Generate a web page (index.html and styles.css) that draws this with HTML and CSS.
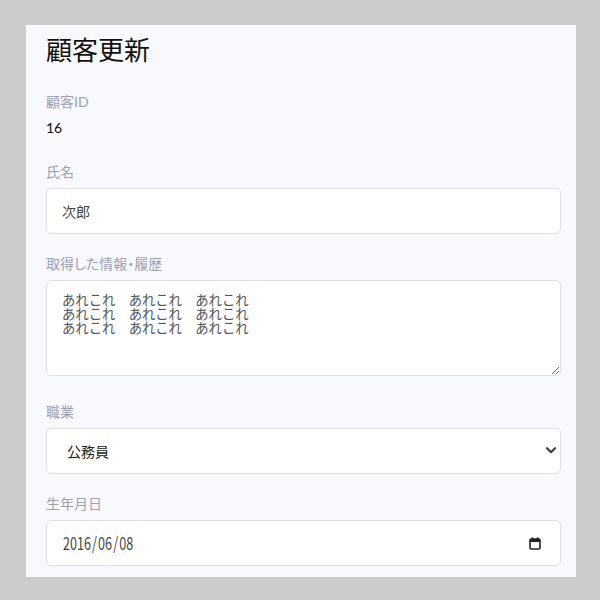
FILE: index.html
```html
<!DOCTYPE html>
<html lang="ja">
<head>
<meta charset="utf-8">
<title>顧客更新</title>
<link rel="stylesheet" href="styles.css">
</head>
<body>
<div class="card">
  <h1 class="title">顧客更新</h1>
  <div class="field field-id">
    <div class="label">顧客ID</div>
    <div class="value">16</div>
  </div>
  <div class="field field-name">
    <label class="label" for="name">氏名</label>
    <input id="name" class="control input" type="text" value="次郎">
  </div>
  <div class="field field-info">
    <label class="label label-prop" for="info">取得した情報・履歴</label>
    <textarea id="info" class="control area">あれこれ　あれこれ　あれこれ
あれこれ　あれこれ　あれこれ
あれこれ　あれこれ　あれこれ</textarea>
  </div>
  <div class="field field-job">
    <label class="label" for="job">職業</label>
    <div class="select-wrap">
      <select id="job" class="control select"><option>公務員</option></select>
      <svg class="chevron" width="10" height="7" viewBox="0 0 10 7"><path d="M1 1.2 L5 5.2 L9 1.2" fill="none" stroke="#3a3f47" stroke-width="2.2" stroke-linecap="round" stroke-linejoin="round"/></svg>
    </div>
  </div>
  <div class="field field-birth">
    <label class="label" for="birth">生年月日</label>
    <div class="control date">
      <span class="date-text">2016<span class="sep">/</span>06<span class="sep">/</span>08</span>
      <svg class="cal" width="12" height="13" viewBox="0 0 12 13"><rect x="1" y="2" width="10" height="10" rx="1.2" fill="none" stroke="#222" stroke-width="1.6"/><rect x="1" y="2" width="10" height="3" fill="#222"/><rect x="2.6" y="0.4" width="1.6" height="2.4" fill="#222"/><rect x="7.8" y="0.4" width="1.6" height="2.4" fill="#222"/></svg>
    </div>
  </div>
</div>
</body>
</html>
```
FILE: styles.css
```css
* { box-sizing: border-box; }
html, body { margin: 0; padding: 0; }
body {
  background: #cccccc;
  font-family: Lato, "Noto Sans CJK JP", sans-serif;
  color: #111;
}
.card {
  margin: 25px 0 0 26px;
  width: 550px;
  height: 552px;
  padding: 8px 15px 0 20px;
  background: #f8f9fc;
  overflow: hidden;
}
.title {
  margin: 0 0 28px 0;
  font-family: "Noto Sans CJK JP", sans-serif;
  font-weight: 400;
  font-size: 26px;
  line-height: 31px;
  color: #111;
}
.label {
  display: block;
  font-family: Lato, "Noto Sans CJK JP", sans-serif;
  font-size: 14px;
  line-height: 20px;
  color: #9ca1b3;
  margin-bottom: 6px;
}
.label-prop { font-feature-settings: "palt"; }
.value {
  font-size: 14px;
  line-height: 20px;
  color: #111;
}
.field-id { margin-bottom: 24px; }
.field-name { margin-bottom: 20px; }
.field-info { margin-bottom: 26px; }
.field-job { margin-bottom: 20px; }
.control {
  display: block;
  width: 100%;
  background: #fff;
  border: 1px solid #dcdfe5;
  border-radius: 5px;
  margin: 0;
  outline: none;
}
.input {
  height: 46px;
  padding: 0 15px;
  font-family: "Noto Sans CJK JP", sans-serif;
  font-size: 14px;
  color: #444;
}
.area {
  height: 96px;
  padding: 13px 15px;
  font-family: "DejaVu Sans Mono", "Noto Sans CJK JP", monospace;
  font-size: 13.333px;
  line-height: 14px;
  color: #50555c;
  resize: vertical;
}
.select-wrap { position: relative; }
.select {
  appearance: none;
  -webkit-appearance: none;
  height: 46px;
  padding: 0 30px 0 20px;
  font-family: "Noto Sans CJK JP", sans-serif;
  font-size: 14px;
  font-weight: 400;
  color: #222;
}
.chevron {
  position: absolute;
  right: 5px;
  top: 19px;
}
.date {
  height: 46px;
  display: flex;
  align-items: center;
  justify-content: space-between;
  padding: 0 19px 0 16px;
}
.date-text {
  display: inline-block;
  font-family: "Noto Sans CJK JP", sans-serif;
  font-size: 17.5px;
  line-height: 20px;
  color: #444;
  transform: scaleX(0.72);
  transform-origin: left center;
}
.sep { margin: 0 1.5px; }
.cal { display: block; }
```
